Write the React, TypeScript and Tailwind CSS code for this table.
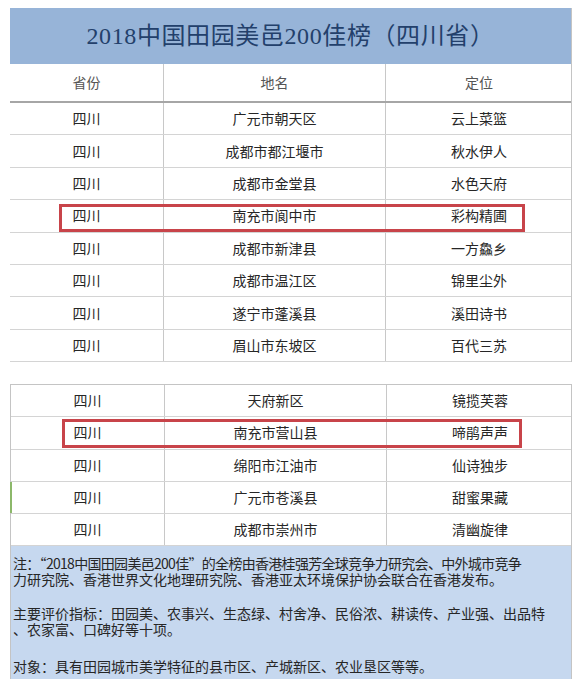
const first = [
  ["四川", "广元市朝天区", "云上菜篮"],
  ["四川", "成都市都江堰市", "秋水伊人"],
  ["四川", "成都市金堂县", "水色天府"],
  ["四川", "南充市阆中市", "彩构精圃"],
  ["四川", "成都市新津县", "一方鱻乡"],
  ["四川", "成都市温江区", "锦里尘外"],
  ["四川", "遂宁市蓬溪县", "溪田诗书"],
  ["四川", "眉山市东坡区", "百代三苏"],
];

const second = [
  ["四川", "天府新区", "镜揽芙蓉"],
  ["四川", "南充市营山县", "啼鹃声声"],
  ["四川", "绵阳市江油市", "仙诗独步"],
  ["四川", "广元市苍溪县", "甜蜜果藏"],
  ["四川", "成都市崇州市", "清幽旋律"],
];

const cjk = { fontFamily: '"Noto Sans CJK SC", sans-serif' };

function Row({ cells, h, marked, markClass, green }: { cells: string[]; h: string; marked?: boolean; markClass?: string; green?: boolean }) {
  return (
    <div className={`relative grid grid-cols-[153px_222px_187px] border-b border-[#d4d4d4] ${h}`}>
      <div className="flex items-center justify-center">{cells[0]}</div>
      <div className="flex items-center justify-center border-l border-[#c8c8c8]">{cells[1]}</div>
      <div className="flex items-center justify-center border-l border-[#c8c8c8]">{cells[2]}</div>
      {green && <div className="absolute -left-[1px] top-0 bottom-0 w-[2px] bg-[#8cb86a]" />}
      {marked && <div className={`absolute border-[3px] border-[#c8444a] ${markClass}`} />}
    </div>
  );
}

export default function App() {
  return (
    <div className="w-[579px] h-[690px] bg-white pt-[8px] pl-[10px] text-[14px] text-[#262626]" style={cjk}>
      <div className="w-[562px] border-r border-[#c4c4c4]">
        <div
          className="h-[56px] bg-[#97b4d8] flex items-center justify-center text-[24px] text-[#23406b] tracking-[0.6px]"
          style={{ fontFamily: '"Liberation Serif", "Noto Sans CJK SC", serif' }}
        >
          2018中国田园美邑200佳榜（四川省）
        </div>
        <div className="grid grid-cols-[153px_222px_187px] h-[39px] border-b-2 border-[#a6a6a6] text-[#555]">
          <div className="flex items-center justify-center">省份</div>
          <div className="flex items-center justify-center border-l border-[#c8c8c8]">地名</div>
          <div className="flex items-center justify-center border-l border-[#c8c8c8]">定位</div>
        </div>
        {first.map((r, i) => (
          <Row key={i} cells={r} h="h-[32.4px]" marked={i === 3} markClass="left-[49px] top-[4px] w-[466px] h-[28px]" />
        ))}
      </div>

      <div className="w-[562px] mt-[22px] border-t border-l border-r border-[#c4c4c4]">
        {second.map((r, i) => (
          <Row key={i} cells={r} h="h-[32.2px]" green={i === 3} marked={i === 1} markClass="left-[51px] top-[2px] w-[460px] h-[29px]" />
        ))}
        <div className="bg-[#c6d8ef] px-[2px] pt-[9px] pb-[5px] leading-[16px] text-[14px] text-[#262626] h-[133px] whitespace-nowrap">
          <p>
            <span className="tracking-[-0.7px]">注：“2018中国田园美邑200佳”的全榜由香港桂强芳全球竞争力研究会、中外城市竞争</span>
            <br />
            力研究院、香港世界文化地理研究院、香港亚太环境保护协会联合在香港发布。
          </p>
          <p className="mt-[18px]">
            主要评价指标：田园美、农事兴、生态绿、村舍净、民俗浓、耕读传、产业强、出品特
            <br />
            、农家富、口碑好等十项。
          </p>
          <p className="mt-[21px]">对象：具有田园城市美学特征的县市区、产城新区、农业垦区等等。</p>
        </div>
      </div>
    </div>
  );
}
